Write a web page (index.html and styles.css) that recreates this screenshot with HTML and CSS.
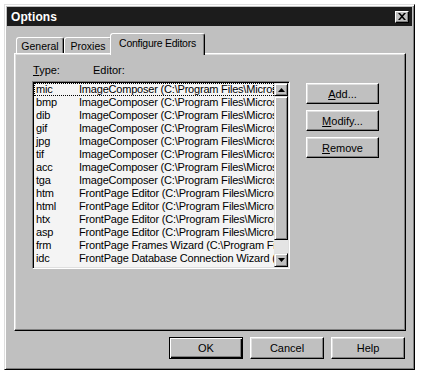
FILE: index.html
```html
<!DOCTYPE html>
<html>
<head>
<meta charset="utf-8">
<link rel="stylesheet" href="styles.css">
</head>
<body>
<div class="window">
  <div class="titlebar">
    <span class="title">Options</span>
    <span class="close"><svg width="8" height="7" viewBox="0 0 8 7"><path d="M0 0h2l2 2.2L6 0h2L5 3.5L8 7H6L4 4.8L2 7H0l3-3.5z" fill="#000"/></svg></span>
  </div>
  <div class="body">
    <div class="tabs">
      <div class="tab">General</div>
      <div class="tab">Proxies</div>
      <div class="tab active">Configure Editors</div>
    </div>
    <div class="panel">
      <div class="labels"><span class="lbl-type"><u>T</u>ype:</span><span>Editor:</span></div>
      <div class="list">
        <div class="rows">
          <div class="row focus"><span class="type">mic</span><span class="editor">ImageComposer (C:\Program Files\Microsoft ImageComposer\imgcomp.exe)</span></div>
          <div class="row"><span class="type">bmp</span><span class="editor">ImageComposer (C:\Program Files\Microsoft ImageComposer\imgcomp.exe)</span></div>
          <div class="row"><span class="type">dib</span><span class="editor">ImageComposer (C:\Program Files\Microsoft ImageComposer\imgcomp.exe)</span></div>
          <div class="row"><span class="type">gif</span><span class="editor">ImageComposer (C:\Program Files\Microsoft ImageComposer\imgcomp.exe)</span></div>
          <div class="row"><span class="type">jpg</span><span class="editor">ImageComposer (C:\Program Files\Microsoft ImageComposer\imgcomp.exe)</span></div>
          <div class="row"><span class="type">tif</span><span class="editor">ImageComposer (C:\Program Files\Microsoft ImageComposer\imgcomp.exe)</span></div>
          <div class="row"><span class="type">acc</span><span class="editor">ImageComposer (C:\Program Files\Microsoft ImageComposer\imgcomp.exe)</span></div>
          <div class="row"><span class="type">tga</span><span class="editor">ImageComposer (C:\Program Files\Microsoft ImageComposer\imgcomp.exe)</span></div>
          <div class="row"><span class="type">htm</span><span class="editor">FrontPage Editor (C:\Program Files\Microsoft FrontPage\bin\fpeditor.exe)</span></div>
          <div class="row"><span class="type">html</span><span class="editor">FrontPage Editor (C:\Program Files\Microsoft FrontPage\bin\fpeditor.exe)</span></div>
          <div class="row"><span class="type">htx</span><span class="editor">FrontPage Editor (C:\Program Files\Microsoft FrontPage\bin\fpeditor.exe)</span></div>
          <div class="row"><span class="type">asp</span><span class="editor">FrontPage Editor (C:\Program Files\Microsoft FrontPage\bin\fpeditor.exe)</span></div>
          <div class="row"><span class="type">frm</span><span class="editor">FrontPage Frames Wizard (C:\Program Files\Microsoft FrontPage\bin\fpeditor.exe)</span></div>
          <div class="row"><span class="type">idc</span><span class="editor">FrontPage Database Connection Wizard (C:\Program Files\Microsoft FrontPage)</span></div>
          <div class="row"><span class="type">asa</span><span class="editor">FrontPage Editor (C:\Program Files\Microsoft FrontPage\bin\fpeditor.exe)</span></div>
        </div>
        <div class="scrollbar">
          <div class="sb-btn"><svg width="7" height="4" viewBox="0 0 7 4"><path d="M3.5 0L7 4H0z" fill="#000"/></svg></div>
          <div class="sb-thumb"></div>
          <div class="sb-track"></div>
          <div class="sb-btn down"><svg width="7" height="4" viewBox="0 0 7 4"><path d="M0 0h7L3.5 4z" fill="#000"/></svg></div>
        </div>
      </div>
      <div class="actions">
        <button class="btn side"><u>A</u>dd...</button>
        <button class="btn side"><u>M</u>odify...</button>
        <button class="btn side"><u>R</u>emove</button>
      </div>
    </div>
    <div class="footer">
      <button class="btn foot default">OK</button>
      <button class="btn foot">Cancel</button>
      <button class="btn foot">Help</button>
    </div>
  </div>
</div>
</body>
</html>
```
FILE: styles.css
```css
html, body {
  margin: 0;
  background: #ffffff;
}
body {
  padding: 4px;
  font-family: "Liberation Sans", Arial, sans-serif;
  font-size: 11px;
  color: #000;
}
.window {
  box-sizing: border-box;
  width: 411px;
  height: 366px;
  background: #c0c0c0;
  border: 1px solid;
  border-color: #dfdfdf #000 #000 #dfdfdf;
  box-shadow: inset 1px 1px #fff, inset -1px -1px #808080;
  padding: 2px;
}
.titlebar {
  height: 19px;
  background: #1c1c1c;
  display: flex;
  align-items: center;
  justify-content: space-between;
  padding: 0 3px 0 4px;
}
.title {
  color: #fff;
  font-weight: bold;
  font-size: 12px;
  letter-spacing: 0.1px;
}
.close {
  box-sizing: border-box;
  width: 14px;
  height: 12px;
  background: #c0c0c0;
  border: 1px solid;
  border-color: #fff #000 #000 #fff;
  box-shadow: inset -1px -1px #808080;
  display: flex;
  align-items: center;
  justify-content: center;
}
.close svg { display: block; }
.body {
  padding: 7px 6px 0 7px;
}
.tabs {
  display: flex;
  align-items: flex-end;
  height: 20px;
  padding-left: 2px;
  position: relative;
  z-index: 1;
}
.tab {
  box-sizing: border-box;
  height: 16px;
  width: 48px;
  border: 1px solid;
  border-bottom: none;
  border-color: #fff #000 transparent #fff;
  border-radius: 3px 3px 0 0;
  box-shadow: inset -1px 0 #808080;
  display: flex;
  align-items: center;
  justify-content: center;
  font-size: 10.5px;
  background: #c0c0c0;
}
.tab.active {
  width: 95px;
  height: 22px;
  margin-left: -2px;
  margin-bottom: -2px;
  padding-bottom: 3px;
  letter-spacing: -0.25px;
}
.panel {
  box-sizing: border-box;
  width: 392px;
  height: 278px;
  border: 1px solid;
  border-color: #fff #000 #000 #fff;
  box-shadow: inset -1px -1px #808080, inset 1px 1px #dfdfdf;
  padding: 10px 0 0 17px;
  display: grid;
  grid-template-columns: 258px 73px;
  grid-template-rows: 13px auto;
  column-gap: 16px;
  row-gap: 4px;
  align-items: start;
}
.labels {
  display: flex;
  line-height: 13px;
  padding-left: 1px;
}
.lbl-type { width: 60px; }
.list {
  grid-column: 1;
  grid-row: 2;
  box-sizing: border-box;
  width: 258px;
  height: 188px;
  border: 1px solid;
  border-color: #808080 #fff #fff #808080;
  box-shadow: inset 1px 1px #000, inset -1px -1px #dfdfdf;
  padding: 1px;
  display: flex;
  background: #f4f4f4;
}
.rows {
  flex: 1;
  min-width: 0;
  overflow: hidden;
  height: 184px;
}
.row {
  display: flex;
  height: 13px;
  line-height: 13px;
  white-space: nowrap;
  overflow: hidden;
  letter-spacing: -0.2px;
}
.row.focus {
  outline: 1px dotted #000;
  outline-offset: -1px;
}
.type {
  width: 43px;
  padding-left: 2px;
  flex: none;
}
.editor {
  overflow: hidden;
}
.scrollbar {
  width: 14px;
  height: 184px;
  display: flex;
  flex-direction: column;
  flex: none;
}
.sb-btn {
  box-sizing: border-box;
  height: 13px;
  background: #c0c0c0;
  border: 1px solid;
  border-color: #dfdfdf #000 #000 #dfdfdf;
  box-shadow: inset 1px 1px #fff, inset -1px -1px #808080;
  display: flex;
  align-items: center;
  justify-content: center;
}
.sb-btn.down { height: 14px; }
.sb-btn svg { display: block; }
.sb-thumb {
  box-sizing: border-box;
  height: 144px;
  background: #c0c0c0;
  border: 1px solid;
  border-color: #dfdfdf #000 #000 #dfdfdf;
  box-shadow: inset 1px 1px #fff, inset -1px -1px #808080;
}
.sb-track {
  height: 13px;
  background: #e4e4e4;
}
.actions {
  grid-column: 2;
  grid-row: 2;
  padding-top: 2px;
  display: flex;
  flex-direction: column;
  gap: 6px;
}
.btn {
  box-sizing: border-box;
  font-family: "Liberation Sans", Arial, sans-serif;
  font-size: 11px;
  color: #000;
  background: #c0c0c0;
  border: 1px solid;
  border-color: #fff #000 #000 #fff;
  box-shadow: inset -1px -1px #808080, inset 1px 1px #dfdfdf;
  padding: 0;
  margin: 0;
  border-radius: 0;
  display: flex;
  align-items: center;
  justify-content: center;
}
.btn.side {
  width: 73px;
  height: 21px;
}
.footer {
  width: 392px;
  display: flex;
  justify-content: flex-end;
  gap: 7px;
  margin-top: 6px;
  padding-right: 1px;
  box-sizing: border-box;
}
.btn.foot {
  width: 74px;
  height: 22px;
}
.btn.default {
  border-color: #000;
  box-shadow: inset 1px 1px #fff, inset -1px -1px #000, inset -2px -2px #808080;
}
```
